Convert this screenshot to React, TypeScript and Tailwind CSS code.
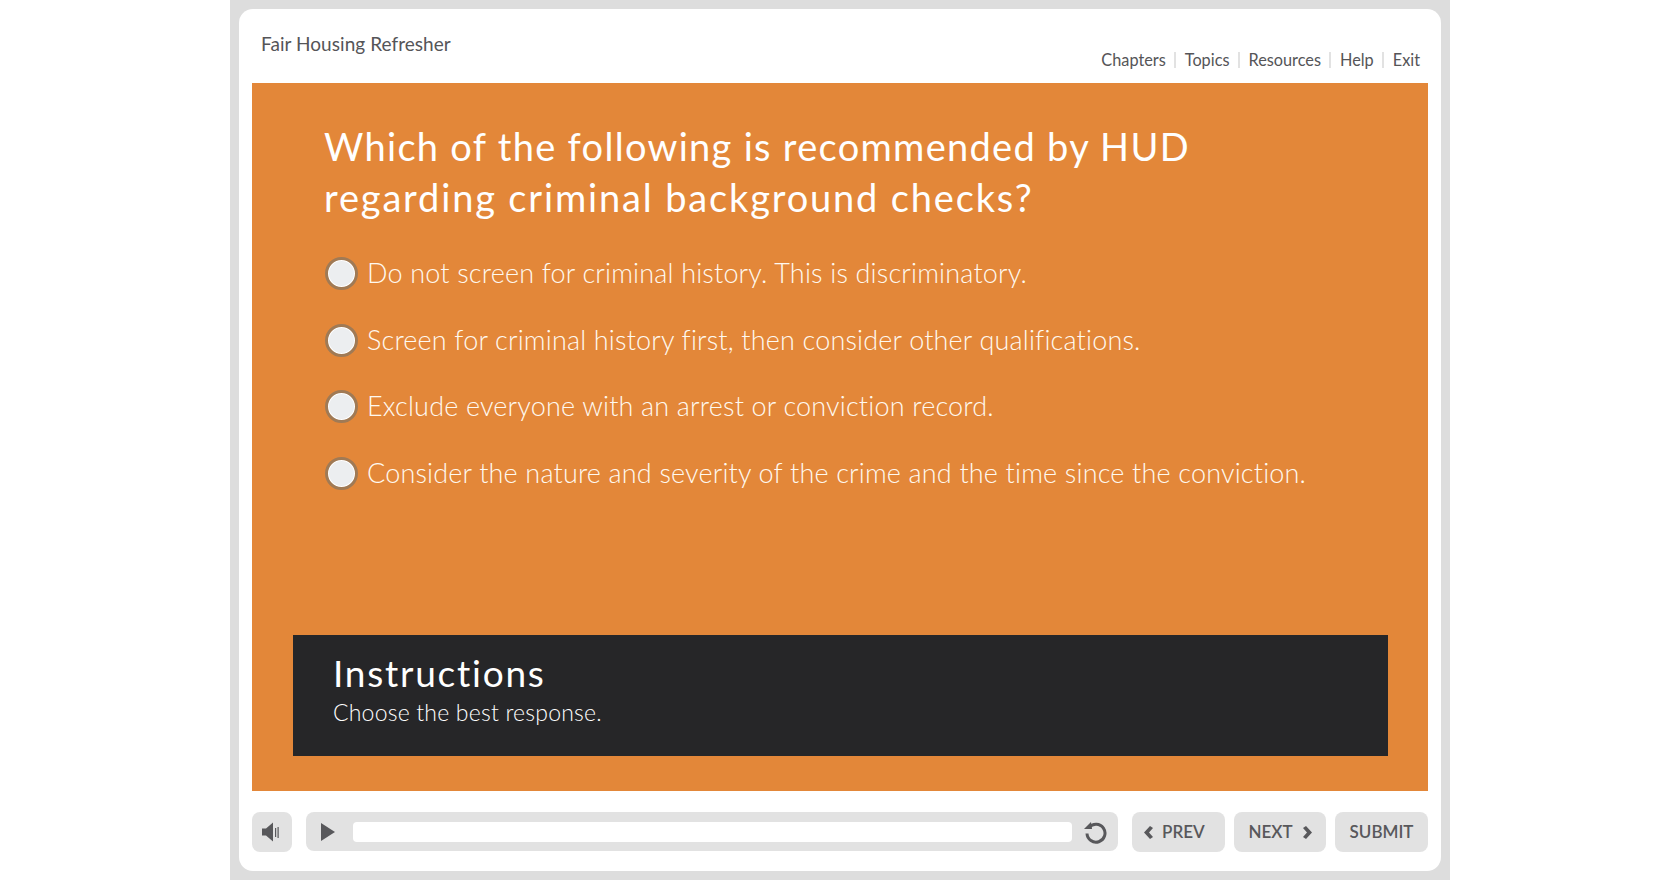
const font = { fontFamily: "Lato, 'Noto Sans', sans-serif" };

const links = ["Chapters", "Topics", "Resources", "Help", "Exit"];

const answers = [
  "Do not screen for criminal history. This is discriminatory.",
  "Screen for criminal history first, then consider other qualifications.",
  "Exclude everyone with an arrest or conviction record.",
  "Consider the nature and severity of the crime and the time since the conviction.",
];

const Header = () => {
  return (
    <div className="flex h-[74px] justify-between pl-[9px] pr-2 text-[#555558]">
      <h1 className="pt-[24px] text-[19px] leading-[22px] tracking-[0.05px]">Fair Housing Refresher</h1>
      <nav className="flex items-start pt-[41px] text-[16.3px] leading-[20px]">
        {links.map((link, i) => (
          <div key={link} className="flex items-center">
            {i > 0 && <span className="mx-[8.5px] h-[16px] w-[2px] bg-[#e2e2e2]" />}
            <span>{link}</span>
          </div>
        ))}
      </nav>
    </div>
  );
};

const Answer = ({ text }: { text: string }) => {
  return (
    <div className="flex h-[66.5px] items-start">
      <div className="ml-[1px] flex size-[33px] shrink-0 items-center justify-center rounded-full border-[3px] border-[#a07a55] bg-white">
        <div className="size-[25px] rounded-full bg-[#eceef0]" />
      </div>
      <span className="ml-[9px] whitespace-nowrap text-[27px] font-light leading-[32px] tracking-[0.17px] text-[#fff9f0]">
        {text}
      </span>
    </div>
  );
};

const Question = () => {
  return (
    <div className="flex h-[708px] flex-col bg-[#e38739] pl-[41px] pr-[40px]">
      <div className="flex-1 pl-[31px] pt-[38px]">
        <h2 className="text-[38px] font-normal leading-[51px] text-white">
          <span className="tracking-[1.3px]">Which of the following is recommended by HUD</span>
          <br />
          <span className="tracking-[1.84px]">regarding criminal background checks?</span>
        </h2>
        <div className="mt-[34px]">
          {answers.map((a) => (
            <Answer key={a} text={a} />
          ))}
        </div>
      </div>
      <div className="mb-[35px] h-[121px] bg-[#262628] pl-[40px] pt-[16px] text-white">
        <div className="text-[37px] leading-[44px] tracking-[1.75px]">Instructions</div>
        <div className="mt-[3px] text-[23px] font-light leading-[28px] tracking-[0.2px]">
          Choose the best response.
        </div>
      </div>
    </div>
  );
};

const Toolbar = () => {
  return (
    <div className="mt-[21px] flex items-start text-[#58585b]">
      <button className="flex size-[40px] items-center justify-start rounded-lg bg-[#e2e2e2] pl-[10px]">
        <svg width="18" height="20" viewBox="0 0 18 20" fill="#58585b">
          <path d="M0 6.5h4L11 0.5v19l-7-6H0z" />
          <rect x="13" y="6" width="1.2" height="9" />
          <rect x="15.5" y="5" width="1.2" height="11" />
        </svg>
      </button>
      <div className="ml-[14px] flex h-[39px] w-[812px] items-center rounded-lg bg-[#e2e2e2]">
        <svg className="ml-[15px]" width="14" height="18" viewBox="0 0 14 18" fill="#58585b">
          <path d="M0 0l14 9-14 9z" />
        </svg>
        <div className="ml-[18px] h-[20px] w-[719px] rounded-sm bg-white" />
        <svg className="ml-[11px]" width="24" height="24" viewBox="0 0 24 24" fill="none" stroke="#58585b" strokeWidth="3">
          <path d="M6 7.500a9 9 0 1 1-2 6" />
          <path d="M1 9h8l-1-7z" fill="#58585b" stroke="none" />
        </svg>
      </div>
      <button className="ml-[14px] flex h-[40px] w-[93px] items-center justify-start gap-[9px] rounded-lg bg-[#e2e2e2] pl-[12px] text-[17px] font-semibold">
        <svg width="9" height="13" viewBox="0 0 9 13" fill="#58585b">
          <path d="M6 0l3 2-4 4.500 4 4.500-3 2-6-6.500z" />
        </svg>
        PREV
      </button>
      <button className="ml-[9px] flex h-[40px] w-[92px] items-center justify-center gap-[10px] rounded-lg bg-[#e2e2e2] text-[17px] font-semibold">
        NEXT
        <svg width="9" height="13" viewBox="0 0 9 13" fill="#58585b">
          <path d="M3 0l-3 2 4 4.500-4 4.500 3 2 6-6.500z" />
        </svg>
      </button>
      <button className="ml-[9px] flex h-[40px] w-[93px] items-center justify-center rounded-lg bg-[#e2e2e2] text-[17px] font-semibold">
        SUBMIT
      </button>
    </div>
  );
};

export default function App() {
  return (
    <div className="flex h-[880px] w-[1680px] justify-center overflow-hidden bg-white" style={font}>
      <div className="h-full w-[1220px] bg-[#dddddd] px-[9px] pb-[9px] pt-[9px]">
        <div className="h-full rounded-[14px] bg-white px-[13px]">
          <Header />
          <Question />
          <Toolbar />
        </div>
      </div>
    </div>
  );
}
